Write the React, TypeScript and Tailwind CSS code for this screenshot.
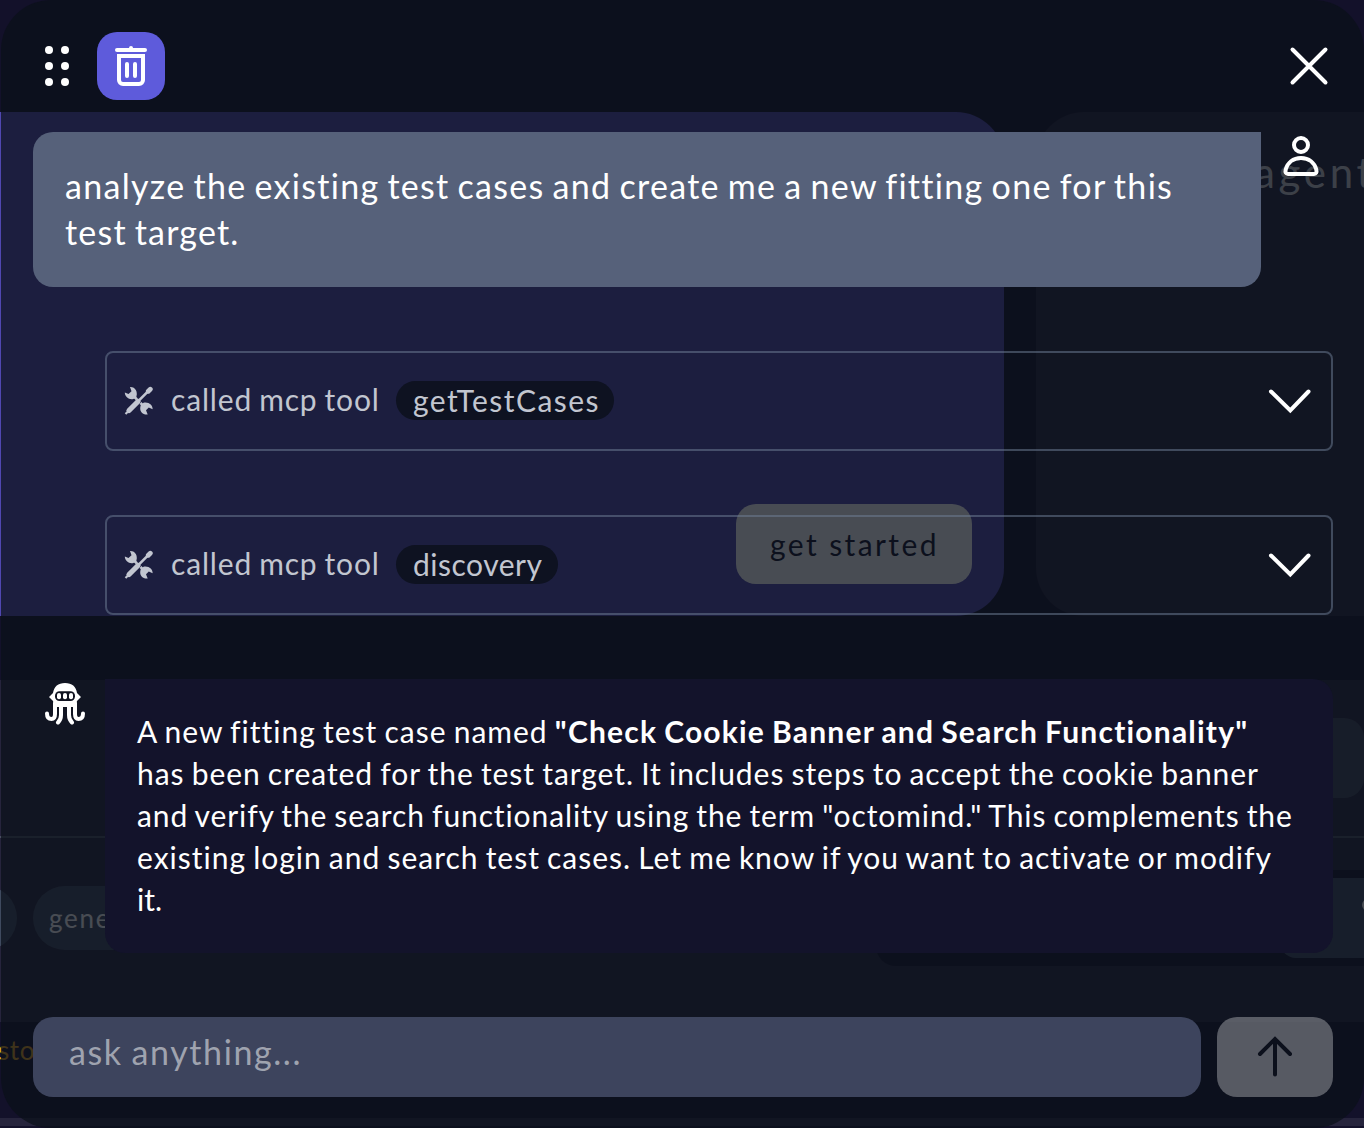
import type { ReactNode } from 'react';

function TrashIcon() {
  return (
    <svg width="36" height="44" viewBox="0 0 36 44" fill="none" stroke="white" strokeLinecap="round">
      <path d="M4 6h28" strokeWidth="4" />
      <path d="M18 5v-1" strokeWidth="4" />
      <path d="M6 12h24v24a4 4 0 0 1-4 4h-16a4 4 0 0 1-4-4z" strokeWidth="4" strokeLinecap="butt" />
      <path d="M14 20v12M22 20v12" strokeWidth="4" />
    </svg>
  );
}

function UserIcon() {
  return (
    <svg className="block" width="36" height="42" viewBox="0 0 36 42" fill="none" stroke="white" strokeWidth="4" strokeLinejoin="round">
      <circle cx="18" cy="10" r="7" />
      <path d="M18 23C10 23 4.500 28 2.700 34.500C2 37.500 3 39 5 39H31C33 39 34 37.500 33.300 34.500C31.500 28 26 23 18 23Z" />
    </svg>
  );
}

function OctopusIcon() {
  return (
    <svg className="block" width="40" height="42" viewBox="0 0 40 42" fill="none">
      <path d="M8 10C9 3.500 13 0 20 0S31 3.500 32 10L33 11L36 14L32 18L30 24H10L8 18L4 14L7 11Z" fill="white" />
      <g stroke="white" strokeWidth="4" strokeLinecap="round">
        <path d="M10 20V31C10 34.500 9 36 6.500 36S2 34.500 2 30.500" />
        <path d="M30 20V31C30 34.500 31 36 33.500 36S38 34.500 38 30.500" />
        <path d="M16 22V32C16 36 15 37.500 13 39.500" />
        <path d="M24 22V32C24 36 25 37.500 27 39.500" />
      </g>
      <rect x="10" y="8.300" width="20" height="9.800" rx="4.500" fill="#111421" />
      <rect x="12" y="10" width="4" height="6.200" rx="2" fill="white" />
      <rect x="18" y="10" width="4" height="6.200" rx="2" fill="white" />
      <rect x="24" y="10" width="4" height="6.200" rx="2" fill="white" />
    </svg>
  );
}

function ToolsIcon() {
  return (
    <svg className="block shrink-0" width="30" height="30" viewBox="0 0 30 30" fill="#c2c6d0">
      <path d="M6 1C10 .6 13.200 4 12.800 8.500L12.300 11L11 12.300L9.300 13C5 14 1 11 .8 6.500L4.500 8L7.500 5.300Z" />
      <path d="M19.500 16.700C24.500 15.500 29 19 28.600 23.300L24.800 21.500L22 24.200L23.700 28.500C19.500 29.200 16 26.300 16.200 22L16.600 19.500Z" />
      <path d="M10 10.500L13 13.500M16.500 17L19 19.500" stroke="#c2c6d0" strokeWidth="2.500" />
      <path d="M25.500 3.800L15 14.300" stroke="#c2c6d0" strokeWidth="2.600" />
      <path d="M24.300 5.200L26.300 3.200" stroke="#c2c6d0" strokeWidth="4.800" strokeLinecap="round" />
      <path d="M14 15.500L5 24.500" stroke="#c2c6d0" strokeWidth="5.200" strokeLinecap="round" />
      <path d="M4.500 25L1.500 28" stroke="#c2c6d0" strokeWidth="2.200" />
    </svg>
  );
}

function ChevronIcon() {
  return (
    <svg className="block" width="44" height="28" viewBox="0 0 44 28" fill="none" stroke="white" strokeWidth="4" strokeLinecap="round">
      <path d="M3 4.500L22.300 23.500L40.500 4.500" />
    </svg>
  );
}

function ToolCall({ children }: { children: ReactNode }) {
  return (
    <div className="ml-[105px] flex h-[100px] w-[1228px] items-center rounded-lg border-2 border-[#7080987f] pr-[19px] pl-[17px]">
      <ToolsIcon />
      <span className="-mt-1 ml-[17px] w-[225px] text-[30px] leading-[40px] tracking-[0.85px] text-[#c2c6d0] [word-spacing:-1.5px]">
        called mcp tool
      </span>
      {children}
      <div className="ml-auto">
        <ChevronIcon />
      </div>
    </div>
  );
}

/* The page that shows through the translucent chat overlay. */
function Backdrop() {
  return (
    <div className="absolute inset-0 flex flex-col overflow-hidden bg-[#13112a]">
      <div className="mt-[112px] flex h-[504px] gap-8">
        <div className="flex w-[1004px] shrink-0 items-end justify-end rounded-r-[48px] bg-[#5047b0] pr-8 pb-8">
          <div className="h-20 w-[236px] rounded-[20px] bg-white pl-[34px] text-[30px] leading-[80px] tracking-[2.4px] text-[#13112a]">
            get started
          </div>
        </div>
        <div className="w-[420px] shrink-0 rounded-l-[48px] bg-[#26243c] pt-10 pl-[218px] text-[42px] leading-[40px] tracking-[3.7px] text-[#cfcfd2]">
          agent
        </div>
      </div>
      <div className="mt-16 flex h-[342px] shrink-0 flex-col bg-[#26243c]">
        <div className="flex h-[156px] justify-end pt-[38px]">
          <div className="h-20 w-[131px] rounded-[20px] bg-[#3f4658]" />
        </div>
        <div className="h-0.5 shrink-0 bg-[#4a4f62]" />
        <div className="flex h-[184px] justify-between">
          <div className="flex gap-4 pt-12">
            <div className="-ml-20 h-16 w-[97px] rounded-full bg-[#3f4a5f]" />
            <div className="h-16 w-[120px] rounded-full bg-[#3f4a5f] pl-4 text-[26px] leading-[64px] tracking-[1.7px] text-white">
              gene
            </div>
          </div>
          <div className="mt-8 flex h-24 w-[488px] items-center justify-end rounded-bl-[20px] bg-[#13112a]">
            <div className="flex h-20 w-[84px] items-start justify-end overflow-hidden rounded-bl-2xl bg-[#3f4a5f] pt-[21px]">
              <div className="-mr-2.5 size-3 rounded-full bg-white" />
            </div>
          </div>
        </div>
      </div>
      <div className="mt-3 -ml-0.5 h-8 text-[26px] leading-8 tracking-[0.6px] text-[#d99a1c]">sto</div>
      <div className="mt-[52px] h-2 shrink-0 bg-[#26243c]" />
    </div>
  );
}

export default function App() {
  return (
    <div className="relative h-[1128px] w-[1364px] overflow-hidden font-['Lato',sans-serif] whitespace-nowrap">
      <Backdrop />
      <div className="relative ml-px flex h-[1128px] flex-col rounded-[50px] bg-[#0b101abf]">
        <div className="-ml-px flex h-[132px] items-start pt-8">
          <div className="ml-[45px] grid grid-cols-2 gap-2 pt-[14px]">
            {[0, 1, 2, 3, 4, 5].map((n) => (
              <span key={n} className="size-2 rounded-full bg-white" />
            ))}
          </div>
          <div className="ml-7 flex size-[68px] items-center justify-center rounded-[20px] bg-[#5e5bdb]">
            <TrashIcon />
          </div>
          <svg className="mt-[14px] mr-[35px] ml-auto" width="40" height="40" viewBox="0 0 40 40" stroke="white" strokeWidth="4" strokeLinecap="round">
            <path d="M3.500 3.500L36.500 36.500M36.500 3.500L3.500 36.500" />
          </svg>
        </div>

        <div className="-ml-px flex h-[155px] pl-[33px]">
          <div className="w-[1228px] rounded-[20px] rounded-tr-none bg-[#56617a] pt-[31px] pl-8 text-[34px] leading-[46px] text-white [word-spacing:-2px]">
            <div className="tracking-[1.3px]">analyze the existing test cases and create me a new fitting one for this</div>
            <div className="tracking-[1.2px]">test target.</div>
          </div>
          <div className="mt-[3px] ml-[22px]">
            <UserIcon />
          </div>
        </div>

        <div className="mt-16 -ml-px flex flex-col gap-16">
          <ToolCall>
            <span className="-mt-0.5 h-[39px] w-[218px] rounded-full bg-[#0e1221] pl-[17px] text-[30px] leading-[38px] tracking-[1.45px] text-[#c2c6d0]">
              getTestCases
            </span>
          </ToolCall>
          <ToolCall>
            <span className="-mt-0.5 h-[39px] w-[162px] rounded-full bg-[#0e1221] pl-[17px] text-[30px] leading-[38px] tracking-[0.5px] text-[#c2c6d0]">
              discovery
            </span>
          </ToolCall>
        </div>

        <div className="mt-16 -ml-px flex h-[274px] items-start">
          <div className="mt-1 ml-[45px]">
            <OctopusIcon />
          </div>
          <div className="ml-5 h-[274px] w-[1228px] rounded-[20px] rounded-tl-none bg-[#13132b] pt-[31px] pl-8 text-[30px] leading-[42px] text-white [word-spacing:-1.5px]">
            <div>
              <span className="tracking-[1px]">A new fitting test case named </span>
              <b className="font-bold tracking-[1.2px]">"Check Cookie Banner and Search Functionality"</b>
            </div>
            <div className="tracking-[0.96px]">has been created for the test target. It includes steps to accept the cookie banner</div>
            <div className="tracking-[0.9px]">and verify the search functionality using the term "octomind." This complements the</div>
            <div className="tracking-[0.99px]">existing login and search test cases. Let me know if you want to activate or modify</div>
            <div>it.</div>
          </div>
        </div>

        <div className="mt-16 -ml-px flex h-20 gap-4 pl-[33px]">
          <div className="w-[1168px] rounded-[20px] bg-[#3d445d] pl-9 text-[34px] leading-[69px] tracking-[1.6px] text-[#9fa3af] [word-spacing:-1.5px]">
            ask anything...
          </div>
          <div className="flex w-[116px] items-center justify-center rounded-[20px] bg-white/31">
            <svg width="36" height="42" viewBox="0 0 36 42" fill="none" stroke="#0c101c" strokeWidth="4" strokeLinecap="round">
              <path d="M18 38.500V3.500M3 18L18 3L33 18" />
            </svg>
          </div>
        </div>
      </div>
    </div>
  );
}
